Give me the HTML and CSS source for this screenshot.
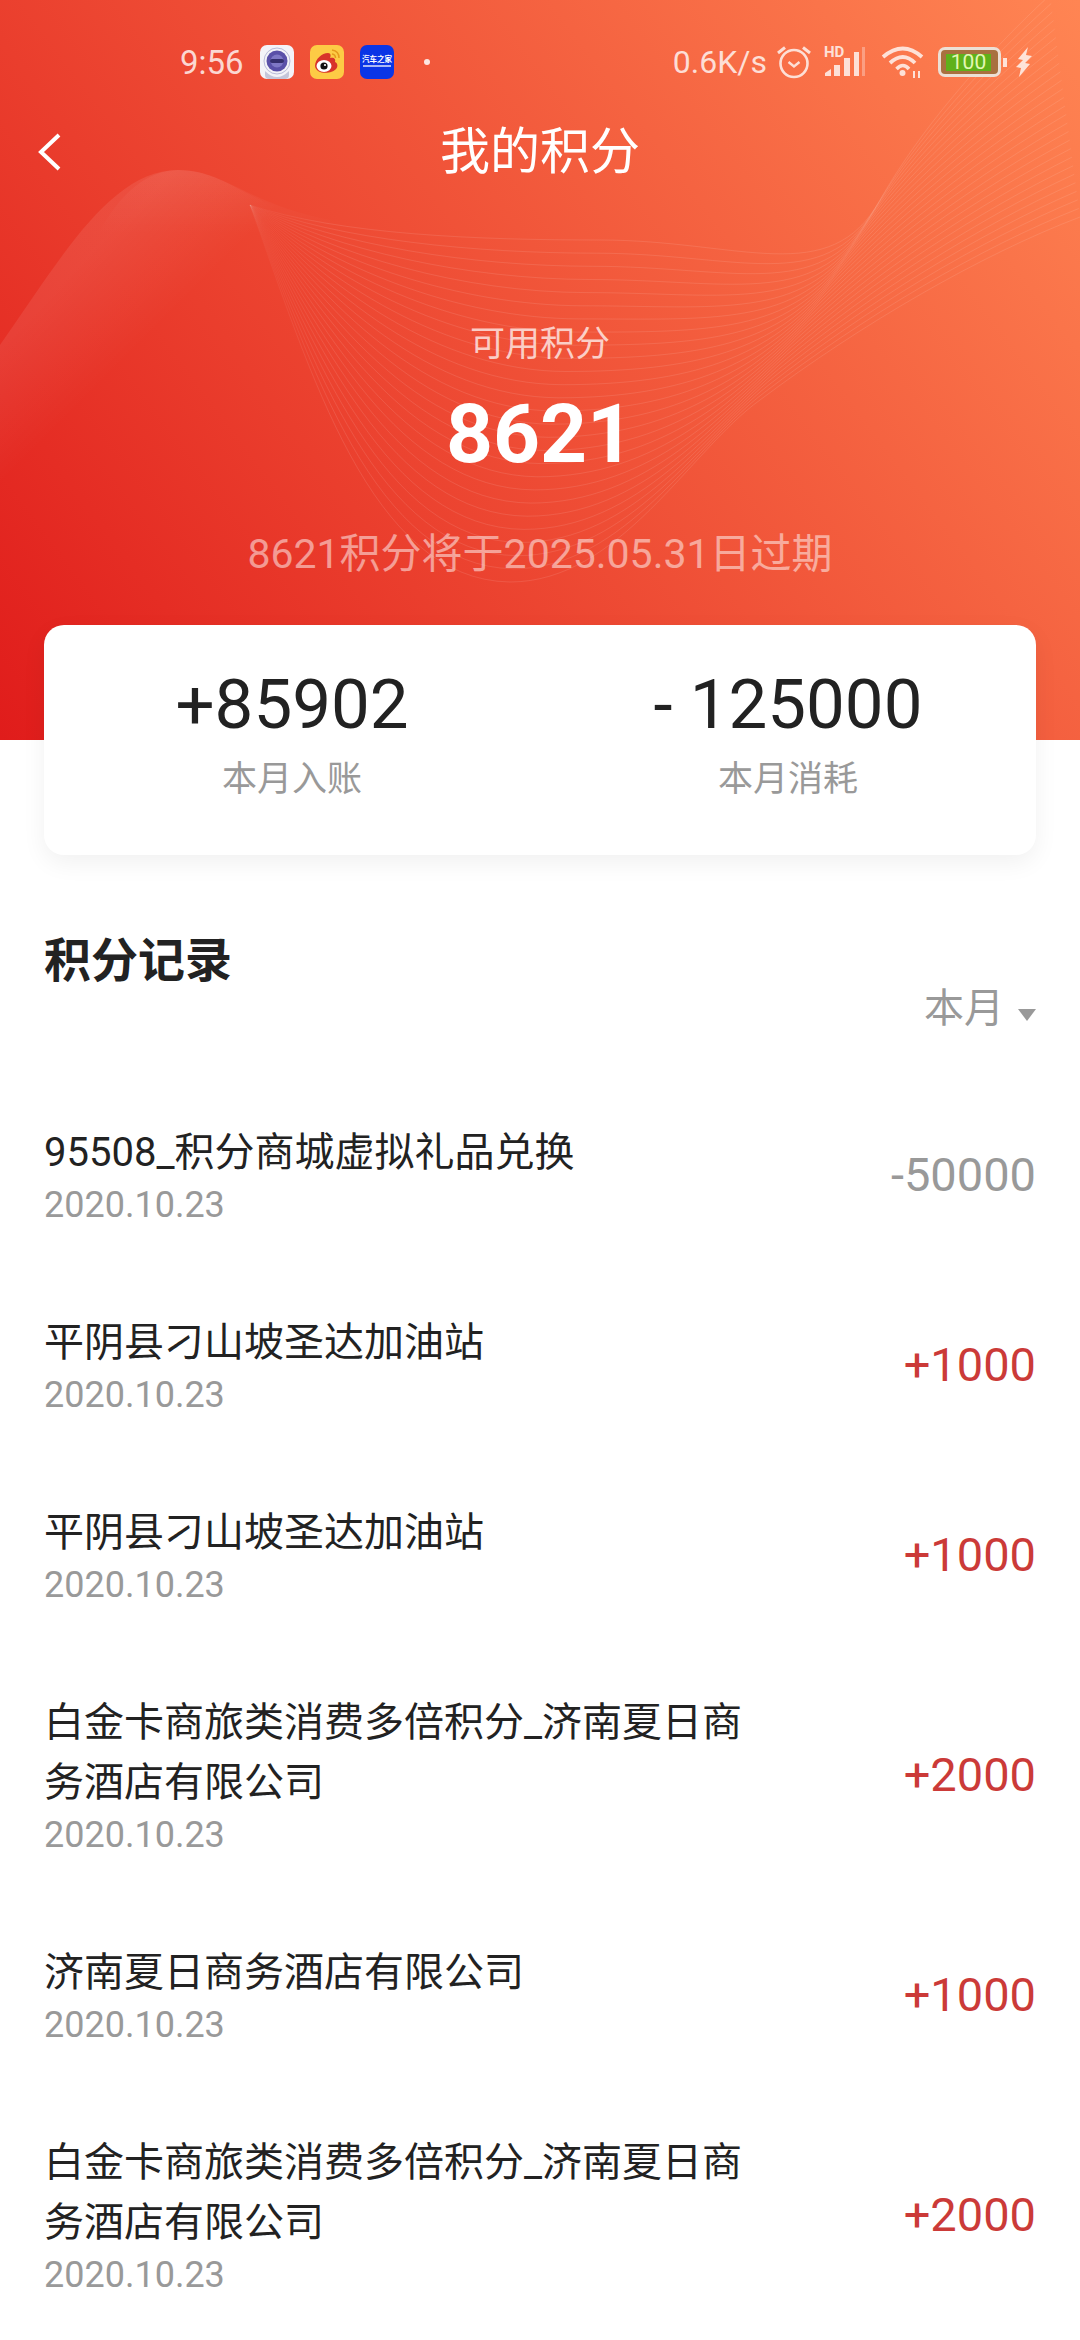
FILE: index.html
```html
<!DOCTYPE html>
<html lang="zh-CN">
<head>
    <meta charset="utf-8">
    <title>我的积分</title>
    <link rel="stylesheet" href="styles.css">
</head>
<body>
    <div class="hero">
        <svg class="wave" id="wave" viewBox="0 0 1080 740" width="1080" height="740">
            <defs>
                <linearGradient id="sheen" x1="60" y1="285" x2="130" y2="355" gradientUnits="userSpaceOnUse">
                    <stop offset="0" stop-color="#fff" stop-opacity="0.08"/>
                    <stop offset="1" stop-color="#fff" stop-opacity="0"/>
                </linearGradient>
                <linearGradient id="sheen-top" x1="0" y1="170" x2="0" y2="235" gradientUnits="userSpaceOnUse">
                    <stop offset="0" stop-color="#fff" stop-opacity="0.05"/>
                    <stop offset="1" stop-color="#fff" stop-opacity="0"/>
                </linearGradient>
                <linearGradient id="line" x1="250" y1="0" x2="330" y2="0" gradientUnits="userSpaceOnUse">
                    <stop offset="0" stop-color="#fff" stop-opacity="0.02"/>
                    <stop offset="1" stop-color="#fff" stop-opacity="0.1"/>
                </linearGradient>
            </defs>
            <path fill="url(#sheen)" d="M0 345 C60 260 110 170 178 170 C225 170 250 205 300 212 L0 490 Z"/>
            <path fill="url(#sheen-top)" d="M95 240 C120 190 150 170 178 170 C225 170 250 205 330 220 L330 240 Z"/>
        </svg>

        <div class="status-bar">
            <div class="status-left">
                <span class="time">9:56</span>
                <svg class="app-icon" viewBox="0 0 34 34">
                    <rect width="34" height="34" rx="7" fill="#f3f3f8"/>
                    <path d="M5 26 Q17 38 29 26 L29 30 Q29 34 25 34 L9 34 Q5 34 5 30 Z" fill="#c5c6da"/>
                    <circle cx="17" cy="16" r="13" fill="none" stroke="#b9bbd8" stroke-width="1"/>
                    <circle cx="17" cy="16" r="10.5" fill="#5a50a8"/>
                    <circle cx="17" cy="16" r="6.5" fill="#7f78c6"/>
                    <rect x="10" y="14" width="14" height="4" rx="2" fill="#352f6e"/>
                </svg>
                <svg class="app-icon" viewBox="0 0 34 34">
                    <rect width="34" height="34" rx="7" fill="#fdcb45"/>
                    <path d="M5 21 C5 14 12 8 18 8 C21 8 21 11 20 13 C24 12 26 14 25 17 C28 18 28 22 26 24 C22 29 6 30 5 21 Z" fill="#d8332a"/>
                    <ellipse cx="14" cy="21" rx="7.5" ry="6" fill="#fff"/>
                    <circle cx="14" cy="21" r="3.6" fill="#111"/>
                    <circle cx="15" cy="20" r="1.1" fill="#fff"/>
                    <path d="M22 5 Q29 6 29 13 M22 9 Q25.500 9.500 25.500 13" fill="none" stroke="#e69a1c" stroke-width="1.5"/>
                </svg>
                <svg class="app-icon" viewBox="0 0 34 34">
                    <rect width="34" height="34" rx="7" fill="#0a35e6"/>
                    <text class="app-text" x="17" y="17" text-anchor="middle">汽车之家</text>
                    <rect x="3" y="20" width="28" height="2" fill="#a9b8f5"/>
                </svg>
                <span class="status-dot"></span>
            </div>
            <div class="status-right">
                <span class="speed">0.6K/s</span>
                <svg class="alarm" width="36" height="34" viewBox="0 0 36 34">
                    <circle cx="18" cy="18.500" r="13.500" fill="none" stroke="#fff" stroke-width="2.600"/>
                    <path d="M12.500 17 L18 21.500 L23.500 17" fill="none" stroke="#fff" stroke-width="2.400"/>
                    <path d="M2 8 L9 2.500 M34 8 L27 2.500" stroke="#fff" stroke-width="3"/>
                </svg>
                <svg class="signal" width="42" height="48" viewBox="0 -8 42 48">
                    <text class="hd-text" x="0" y="11">HD</text>
                    <path d="M1 30 L1 27 L7 23 L7 30 Z" fill="#fff"/>
                    <rect x="10" y="19" width="6" height="11" fill="#fff"/>
                    <rect x="20" y="12" width="6" height="18" fill="#fff"/>
                    <rect x="30" y="6" width="5" height="24" fill="#fff"/>
                    <rect x="38" y="1" width="3" height="29" fill="#fff" opacity="0.4"/>
                </svg>
                <svg class="wifi" width="45" height="33" viewBox="0 0 45 33">
                    <path d="M2 11 Q22 -6 41 11" fill="none" stroke="#fff" stroke-width="3.800"/>
                    <path d="M9 17 Q22 5 34 17" fill="none" stroke="#fff" stroke-width="3.800"/>
                    <path d="M15.500 23 Q22 16 28 23" fill="none" stroke="#fff" stroke-width="3.600"/>
                    <circle cx="21.500" cy="27" r="3" fill="#fff"/>
                    <path d="M33 25 L33 32 M38 25 L38 32" stroke="#fff" stroke-width="2"/>
                </svg>
                <div class="battery">
                    <span class="battery-level">100</span>
                </div>
                <span class="battery-nub"></span>
                <svg class="bolt" width="17" height="30" viewBox="0 0 17 30">
                    <path d="M12 0 L2 12 L7 13 L0 20 L5 21 L3 30 L14 17 L9 16 L16 9 L10 8 Z" fill="#fff"/>
                </svg>
            </div>
        </div>

        <div class="nav">
            <svg class="back" width="26" height="38" viewBox="0 0 26 38">
                <path d="M22 2 L4 19 L22 36" fill="none" stroke="#fff" stroke-width="4"/>
            </svg>
            <h1>我的积分</h1>
        </div>

        <div class="balance">
            <div class="balance-label">可用积分</div>
            <div class="balance-value">8621</div>
            <div class="balance-note">8621积分将于2025.05.31日过期</div>
        </div>
    </div>

    <div class="summary">
        <div class="summary-col">
            <div class="summary-value">+85902</div>
            <div class="summary-label">本月入账</div>
        </div>
        <div class="summary-col">
            <div class="summary-value">- 125000</div>
            <div class="summary-label">本月消耗</div>
        </div>
    </div>

    <div class="records-head">
        <h2>积分记录</h2>
        <div class="filter">本月<span class="caret"></span></div>
    </div>

    <div class="records">
        <div class="record">
            <div class="record-info">
                <div class="record-title">95508_积分商城虚拟礼品兑换</div>
                <div class="record-date">2020.10.23</div>
            </div>
            <div class="amount out">-50000</div>
        </div>
        <div class="record">
            <div class="record-info">
                <div class="record-title">平阴县刁山坡圣达加油站</div>
                <div class="record-date">2020.10.23</div>
            </div>
            <div class="amount">+1000</div>
        </div>
        <div class="record">
            <div class="record-info">
                <div class="record-title">平阴县刁山坡圣达加油站</div>
                <div class="record-date">2020.10.23</div>
            </div>
            <div class="amount">+1000</div>
        </div>
        <div class="record">
            <div class="record-info">
                <div class="record-title">白金卡商旅类消费多倍积分_济南夏日商务酒店有限公司</div>
                <div class="record-date">2020.10.23</div>
            </div>
            <div class="amount">+2000</div>
        </div>
        <div class="record">
            <div class="record-info">
                <div class="record-title">济南夏日商务酒店有限公司</div>
                <div class="record-date">2020.10.23</div>
            </div>
            <div class="amount">+1000</div>
        </div>
        <div class="record">
            <div class="record-info">
                <div class="record-title">白金卡商旅类消费多倍积分_济南夏日商务酒店有限公司</div>
                <div class="record-date">2020.10.23</div>
            </div>
            <div class="amount">+2000</div>
        </div>
    </div>

    <script src="wave.js"></script>
</body>
</html>
```

FILE: styles.css
```css
html, body {
    margin: 0;
    padding: 0;
}

body {
    width: 1080px;
    height: 2340px;
    overflow: hidden;
    background-color: #fff;
    font-family: Roboto, "Noto Sans CJK SC", sans-serif;
    color: #222;
}

h1, h2 {
    margin: 0;
    font-weight: 400;
}

/* Red header */
.hero {
    position: relative;
    height: 740px;
    overflow: hidden;
    background: linear-gradient(53deg, #e01c1b, #ff8553);
    color: #fff;
}

.wave {
    position: absolute;
    top: 0;
    left: 0;
}

.status-bar,
.nav,
.balance {
    position: relative;
}

.status-bar {
    display: flex;
    justify-content: space-between;
    align-items: center;
    height: 124px;
    padding: 0 47px 0 180px;
}

.status-left,
.status-right {
    display: flex;
    align-items: center;
}

.time,
.speed {
    font-size: 33px;
    color: rgba(255, 255, 255, 0.78);
}

.speed {
    font-size: 32px;
    margin-right: 9px;
}

.app-icon {
    width: 34px;
    height: 34px;
    margin-left: 16px;
}

.app-text {
    font-size: 7.500px;
    font-weight: 700;
    fill: #fff;
}

.status-dot {
    width: 6px;
    height: 6px;
    margin-left: 30px;
    border-radius: 50%;
    background: rgba(255, 255, 255, 0.85);
}

.alarm,
.signal,
.wifi,
.bolt {
    opacity: 0.78;
}

.signal {
    margin-left: 12px;
}

.hd-text {
    font-size: 15px;
    font-weight: 700;
    fill: #fff;
}

.wifi {
    margin-left: 15px;
}

.battery {
    display: flex;
    align-items: center;
    justify-content: center;
    box-sizing: border-box;
    width: 63px;
    height: 30px;
    margin-left: 12px;
    padding: 0 5px;
    border: 3px solid rgba(255, 255, 255, 0.78);
    border-radius: 7px;
    background: #a8713f;
}

.battery-level {
    flex: 1;
    height: 17px;
    line-height: 17px;
    margin-right: 2px;
    background: #5fb11a;
    font-size: 21px;
    text-align: center;
    color: #e4f7b4;
}

.battery-nub {
    width: 4px;
    height: 9px;
    margin-left: 2px;
    background: rgba(255, 255, 255, 0.78);
}

.bolt {
    margin-left: 9px;
}

.nav {
    display: grid;
    grid-template-columns: 1fr auto 1fr;
    align-items: center;
    height: 54px;
    margin-top: 1px;
}

.back {
    margin-left: 37px;
}

.nav h1 {
    font-size: 50px;
    line-height: 54px;
}

.balance {
    padding-top: 146px;
    text-align: center;
}

.balance-label {
    font-size: 35px;
    line-height: 40px;
    color: rgba(255, 255, 255, 0.72);
}

.balance-value {
    margin-top: 24px;
    font-size: 82px;
    line-height: 90px;
    font-weight: 700;
}

.balance-note {
    margin-top: 50px;
    font-size: 41px;
    line-height: 50px;
    color: rgba(255, 255, 255, 0.5);
}

/* Card over the header edge */
.summary {
    position: relative;
    display: grid;
    grid-template-columns: 1fr 1fr;
    height: 230px;
    margin: -115px 44px 0;
    border-radius: 20px;
    background: #fff;
    box-shadow: 0 8px 24px rgba(0, 0, 0, 0.06);
    text-align: center;
}

.summary-value {
    margin-top: 40px;
    font-size: 69px;
    line-height: 80px;
    color: #222;
}

.summary-label {
    margin-top: 15px;
    font-size: 35px;
    line-height: 40px;
    color: #999;
}

/* Records */
.records-head {
    display: flex;
    justify-content: space-between;
    align-items: flex-start;
    margin: 76px 44px 0;
}

.records-head h2 {
    font-size: 47px;
    line-height: 60px;
    font-weight: 700;
    color: #222;
}

.filter {
    display: flex;
    align-items: center;
    margin-top: 53px;
    font-size: 40px;
    line-height: 50px;
    color: #999;
}

.caret {
    width: 0;
    height: 0;
    margin: 12px 0 0 14px;
    border-top: 12px solid #999;
    border-left: 9px solid transparent;
    border-right: 9px solid transparent;
}

.records {
    margin: 46px 44px 0;
}

.record {
    display: flex;
    justify-content: space-between;
    align-items: center;
    padding: 43px 0;
}

.record-info {
    width: 720px;
}

.record-title {
    font-size: 40px;
    line-height: 60px;
    color: #222;
}

.record-date {
    font-size: 36px;
    line-height: 44px;
    color: #999;
}

.amount {
    padding-bottom: 2px;
    font-size: 47px;
    color: #cb3a38;
}

.amount.out {
    color: #999;
}
```

FILE: wave.js
```js
// fine line fan on the header, drawn between two bezier outlines
var outer = [250, 205, 340, 235, 480, 240, 600, 240, 740, 240, 830, 290, 880, 200, 920, 130, 980, 60, 1050, -5];
var inner = [250, 205, 310, 370, 370, 580, 510, 582, 620, 582, 690, 450, 760, 400, 860, 325, 980, 255, 1080, 217];
var count = 26;
var svg = document.getElementById('wave');

for (var i = 0; i <= count; i++) {
    var t = i / count;
    var p = outer.map(function (v, n) {
        return (v + (inner[n] - v) * t).toFixed(1);
    });
    var d = 'M' + p[0] + ' ' + p[1] + ' C' + p.slice(2, 8).join(' ') + ' C' + p.slice(8, 14).join(' ') + ' C' + p.slice(14).join(' ');
    var path = document.createElementNS('http://www.w3.org/2000/svg', 'path');
    path.setAttribute('d', d);
    path.setAttribute('fill', 'none');
    path.setAttribute('stroke', 'url(#line)');
    svg.appendChild(path);
}
```
